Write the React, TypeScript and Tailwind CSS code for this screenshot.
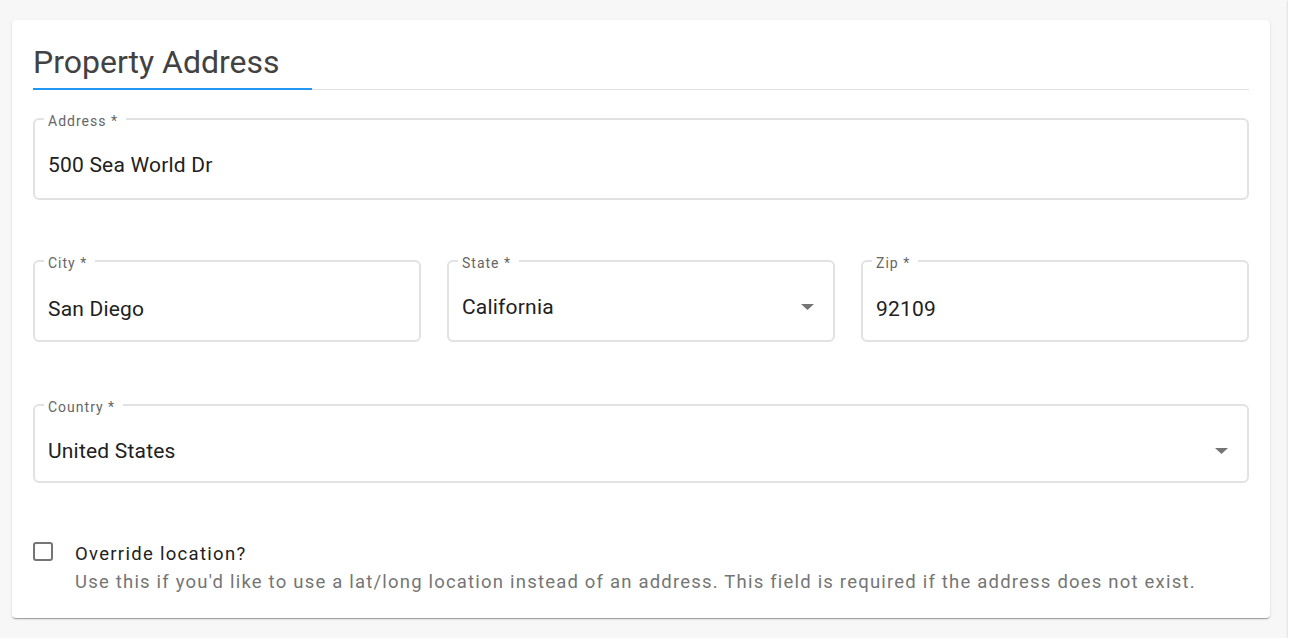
import React from 'react';

const cardShadow =
    'shadow-[0_2px_1px_-1px_rgba(0,0,0,0.2),0_1px_1px_0_rgba(0,0,0,0.14),0_1px_3px_0_rgba(0,0,0,0.12)]';

const Caret: React.FC<{ className?: string }> = ({ className }) => (
    <svg viewBox="0 0 13 6" width="13" height="6" className={className}>
        <path d="M0 0 L6.5 6 L13 0 Z" fill="#757575" />
    </svg>
);

type FieldProps = {
    label: string;
    value: string;
    select?: boolean;
    className?: string;
    bodyClass: string;
};

const Field: React.FC<FieldProps> = ({ label, value, select, className, bodyClass }) => (
    <fieldset className={`border-2 border-[#e2e2e2] rounded-[6px] px-[13px] min-w-0 ${className ?? ''}`}>
        <legend className="ml-[-4px] pl-1 pr-2 text-[14px] leading-[16px] tracking-[1px] text-[#666666]">
            <span className="relative top-[2px]">{label}</span>
        </legend>
        <div className={`flex items-center justify-between text-[21px] leading-[24px] tracking-[0.2px] text-[#212121] ${bodyClass}`}>
            <span>{value}</span>
            {select && <Caret className="mr-[6px]" />}
        </div>
    </fieldset>
);

export default function App() {
    return (
        <div className="h-[638px] overflow-hidden bg-[#f7f7f7] font-['Roboto',sans-serif] flex gap-[18px] pl-[12px]">
            <div className="w-[1258px] shrink-0 flex flex-col gap-[20px]">
                <div className={`h-[0px] bg-white ${cardShadow}`} />

                <div className={`bg-white rounded-[4px] ${cardShadow} px-[21px] pt-[22px] pb-[21px]`}>
                    <div className="flex items-end border-b border-[#e0e0e0]">
                        <h2 className="w-[279px] border-b-2 border-[#2196f3] mb-[-1px] pb-[6px] text-[32px] leading-[40px] text-[#424242] font-normal">
                            Property Address
                        </h2>
                    </div>

                    <div className="flex flex-col mt-[21px]">
                        <Field label="Address *" value="500 Sea World Dr" bodyClass="pt-[26px] pb-[21px]" />

                        <div className="grid grid-cols-3 gap-[26px] mt-[53px]">
                            <Field label="City *" value="San Diego" bodyClass="pt-[28px] pb-[19px]" />
                            <Field label="State *" value="California" select bodyClass="pt-[26px] pb-[21px]" />
                            <Field label="Zip *" value="92109" bodyClass="pt-[28px] pb-[19px]" />
                        </div>

                        <Field label="Country *" value="United States" select className="mt-[55px]" bodyClass="pt-[26px] pb-[18px]" />
                    </div>

                    <div className="flex items-start gap-[22px] mt-[58px]">
                        <div className="w-[20px] h-[19px] border-2 border-[#757575] rounded-[3px] mt-[1px] shrink-0" />
                        <div>
                            <div className="text-[18.5px] leading-[26px] tracking-[1.3px] text-[#212121]">Override location?</div>
                            <div className="text-[18.5px] leading-[30px] tracking-[1.2px] text-[#757575]">
                                Use this if you'd like to use a lat/long location instead of an address. This field is required if the address does not exist.
                            </div>
                        </div>
                    </div>
                </div>

                <div className={`h-[200px] bg-white rounded-[4px] ${cardShadow}`} />
            </div>

            <div className={`w-[300px] h-[700px] shrink-0 bg-white ${cardShadow}`} />
        </div>
    );
}
